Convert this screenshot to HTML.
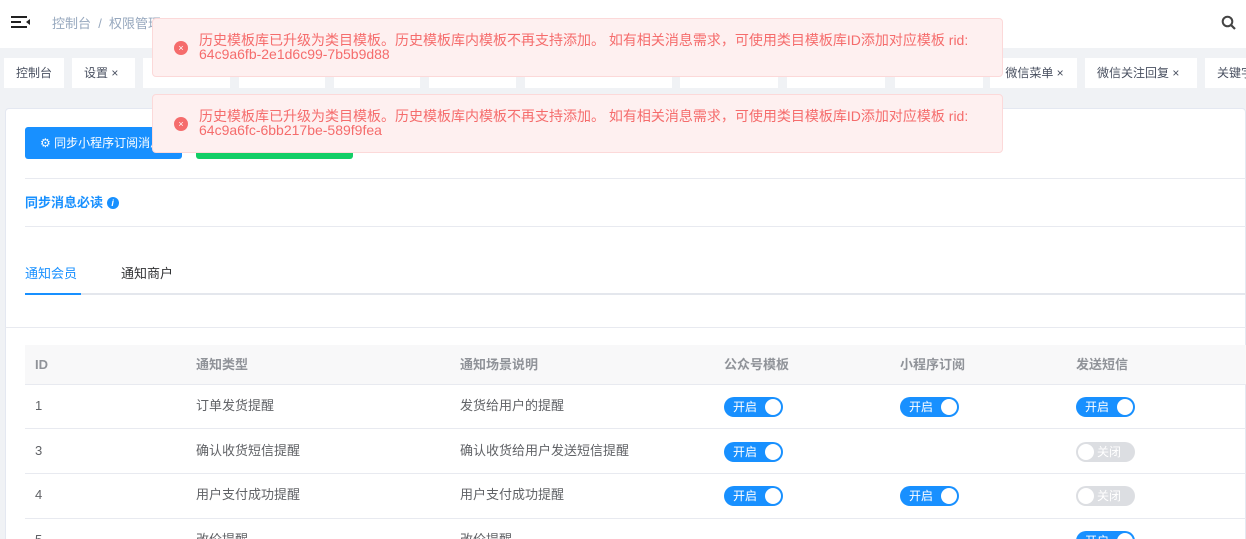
<!DOCTYPE html>
<html style="overflow:hidden;height:539px"><head><meta charset="utf-8"><style>
*{box-sizing:border-box;margin:0;padding:0}
body{width:1246px;height:539px;overflow:hidden;background:#f0f2f5;font-family:"Liberation Sans","Noto Sans CJK SC",sans-serif;font-size:13px;color:#606266;position:relative}
.abs{position:absolute;line-height:16px}
.top{left:0;top:0;width:1246px;height:48px;background:#fff}
.tag{top:58px;height:30px;background:#fff;line-height:30px;padding-left:12px;color:#495060;font-size:12px}
.card{left:5px;top:108px;width:1241px;height:440px;background:#fff;border:1px solid #e4e8f1;border-radius:4px}
.line{height:1px;background:#e8eaf0}
.toast{left:152px;width:851px;height:59px;background:#fef0f0;border:1px solid #fcd9d9;border-radius:4px;color:#f56c6c;font-size:14px;line-height:14px;padding:14px 0 0 46px}
.toast i{position:absolute;left:21px;top:22px;width:14px;height:14px;border-radius:50%;background:#f56c6c;color:#fff;font-style:normal;font-size:9px;line-height:14px;text-align:center}
.sw{width:59px;height:20px;border-radius:10px;background:#1890ff;color:#fff;font-size:12px;line-height:20px;padding-left:9px}
.sw:after{content:"";position:absolute;right:2px;top:2px;width:16px;height:16px;border-radius:50%;background:#fff}
.sw.off{background:#dcdee2;padding-left:21px}
.sw.off:after{left:2px;right:auto}
.cell{font-size:13px;color:#606266;height:16px;line-height:16px}
.hd{color:#909399;font-weight:bold}
</style></head><body>
<div class="abs top"></div>
<div class="abs" style="left:11px;top:16px;width:16px;height:2px;background:#222"></div>
<div class="abs" style="left:11px;top:21px;width:10px;height:2px;background:#222"></div>
<div class="abs" style="left:11px;top:26px;width:16px;height:2px;background:#222"></div>
<div class="abs" style="left:23px;top:19px;width:0;height:0;border:3px solid transparent;border-right:4px solid #222"></div>
<div class="abs" style="left:52px;top:16px;color:#97a8be;font-size:13px">控制台 &nbsp;/&nbsp; 权限管理</div>
<svg class="abs" style="left:1221px;top:15px" width="16" height="16" viewBox="0 0 16 16"><circle cx="6.5" cy="6.5" r="4.8" fill="none" stroke="#444" stroke-width="2"/><path d="M10 10l4 4" stroke="#444" stroke-width="2.2"/></svg>

<div class="abs tag" style="left:4px;width:60px">控制台</div>
<div class="abs tag" style="left:72px;width:63px">设置 ×</div>
<div class="abs tag" style="left:143px;width:87px"></div>
<div class="abs tag" style="left:239px;width:86px"></div>
<div class="abs tag" style="left:334px;width:86px"></div>
<div class="abs tag" style="left:429px;width:87px"></div>
<div class="abs tag" style="left:525px;width:147px"></div>
<div class="abs tag" style="left:680px;width:98px"></div>
<div class="abs tag" style="left:787px;width:98px"></div>
<div class="abs tag" style="left:895px;width:88px"></div>
<div class="abs tag" style="left:990px;width:87px">&nbsp;微信菜单 ×</div>
<div class="abs tag" style="left:1085px;width:112px">微信关注回复 ×</div>
<div class="abs tag" style="left:1205px;width:60px">关键字</div>

<div class="abs card"></div>
<div class="abs" style="left:25px;top:127px;width:157px;height:32px;background:#1890ff;border-radius:3px;color:#fff;font-size:12px;line-height:32px;padding-left:15px">⚙ 同步小程序订阅消息</div>
<div class="abs" style="left:196px;top:127px;width:157px;height:32px;background:#13ce66;border-radius:3px"></div>
<div class="abs line" style="left:25px;top:178px;width:1221px"></div>
<div class="abs" style="left:25px;top:195px;color:#1890ff;font-weight:bold;font-size:13px">同步消息必读 <span style="display:inline-block;width:12px;height:12px;border-radius:50%;background:#1890ff;color:#fff;font-size:9px;line-height:12px;text-align:center;font-style:italic;vertical-align:1px">i</span></div>
<div class="abs line" style="left:25px;top:226px;width:1221px"></div>
<div class="abs" style="left:25px;top:266px;color:#1890ff;font-size:13px">通知会员</div>
<div class="abs" style="left:121px;top:266px;color:#303133;font-size:13px">通知商户</div>
<div class="abs" style="left:25px;top:293px;width:1221px;height:2px;background:#e4e7ed"></div>
<div class="abs" style="left:25px;top:293px;width:56px;height:2px;background:#1890ff"></div>
<div class="abs line" style="left:5px;top:327px;width:1241px"></div>

<div class="abs" style="left:25px;top:345px;width:1221px;height:39px;background:#f8f8f9"></div>
<div class="abs cell hd" style="left:35px;top:357px">ID</div>
<div class="abs cell hd" style="left:196px;top:357px">通知类型</div>
<div class="abs cell hd" style="left:460px;top:357px">通知场景说明</div>
<div class="abs cell hd" style="left:724px;top:357px">公众号模板</div>
<div class="abs cell hd" style="left:900px;top:357px">小程序订阅</div>
<div class="abs cell hd" style="left:1076px;top:357px">发送短信</div>
<div class="abs line" style="left:25px;top:384px;width:1221px"></div>
<div class="abs line" style="left:25px;top:428px;width:1221px"></div>
<div class="abs line" style="left:25px;top:473px;width:1221px"></div>
<div class="abs line" style="left:25px;top:518px;width:1221px"></div>

<div class="abs cell" style="left:35px;top:398px">1</div>
<div class="abs cell" style="left:196px;top:398px">订单发货提醒</div>
<div class="abs cell" style="left:460px;top:398px">发货给用户的提醒</div>
<div class="abs sw" style="left:724px;top:397px">开启</div>
<div class="abs sw" style="left:900px;top:397px">开启</div>
<div class="abs sw" style="left:1076px;top:397px">开启</div>

<div class="abs cell" style="left:35px;top:443px">3</div>
<div class="abs cell" style="left:196px;top:443px">确认收货短信提醒</div>
<div class="abs cell" style="left:460px;top:443px">确认收货给用户发送短信提醒</div>
<div class="abs sw" style="left:724px;top:442px">开启</div>
<div class="abs sw off" style="left:1076px;top:442px">关闭</div>

<div class="abs cell" style="left:35px;top:487px">4</div>
<div class="abs cell" style="left:196px;top:487px">用户支付成功提醒</div>
<div class="abs cell" style="left:460px;top:487px">用户支付成功提醒</div>
<div class="abs sw" style="left:724px;top:486px">开启</div>
<div class="abs sw" style="left:900px;top:486px">开启</div>
<div class="abs sw off" style="left:1076px;top:486px">关闭</div>

<div class="abs cell" style="left:35px;top:532px">5</div>
<div class="abs cell" style="left:196px;top:532px">改价提醒</div>
<div class="abs cell" style="left:460px;top:532px">改价提醒</div>
<div class="abs sw" style="left:1076px;top:531px">开启</div>

<div class="abs toast" style="top:18px"><i>×</i>历史模板库已升级为类目模板。历史模板库内模板不再支持添加。 如有相关消息需求，可使用类目模板库ID添加对应模板 rid:<br>64c9a6fb-2e1d6c99-7b5b9d88</div>
<div class="abs toast" style="top:94px"><i>×</i>历史模板库已升级为类目模板。历史模板库内模板不再支持添加。 如有相关消息需求，可使用类目模板库ID添加对应模板 rid:<br>64c9a6fc-6bb217be-589f9fea</div>
</body></html>
